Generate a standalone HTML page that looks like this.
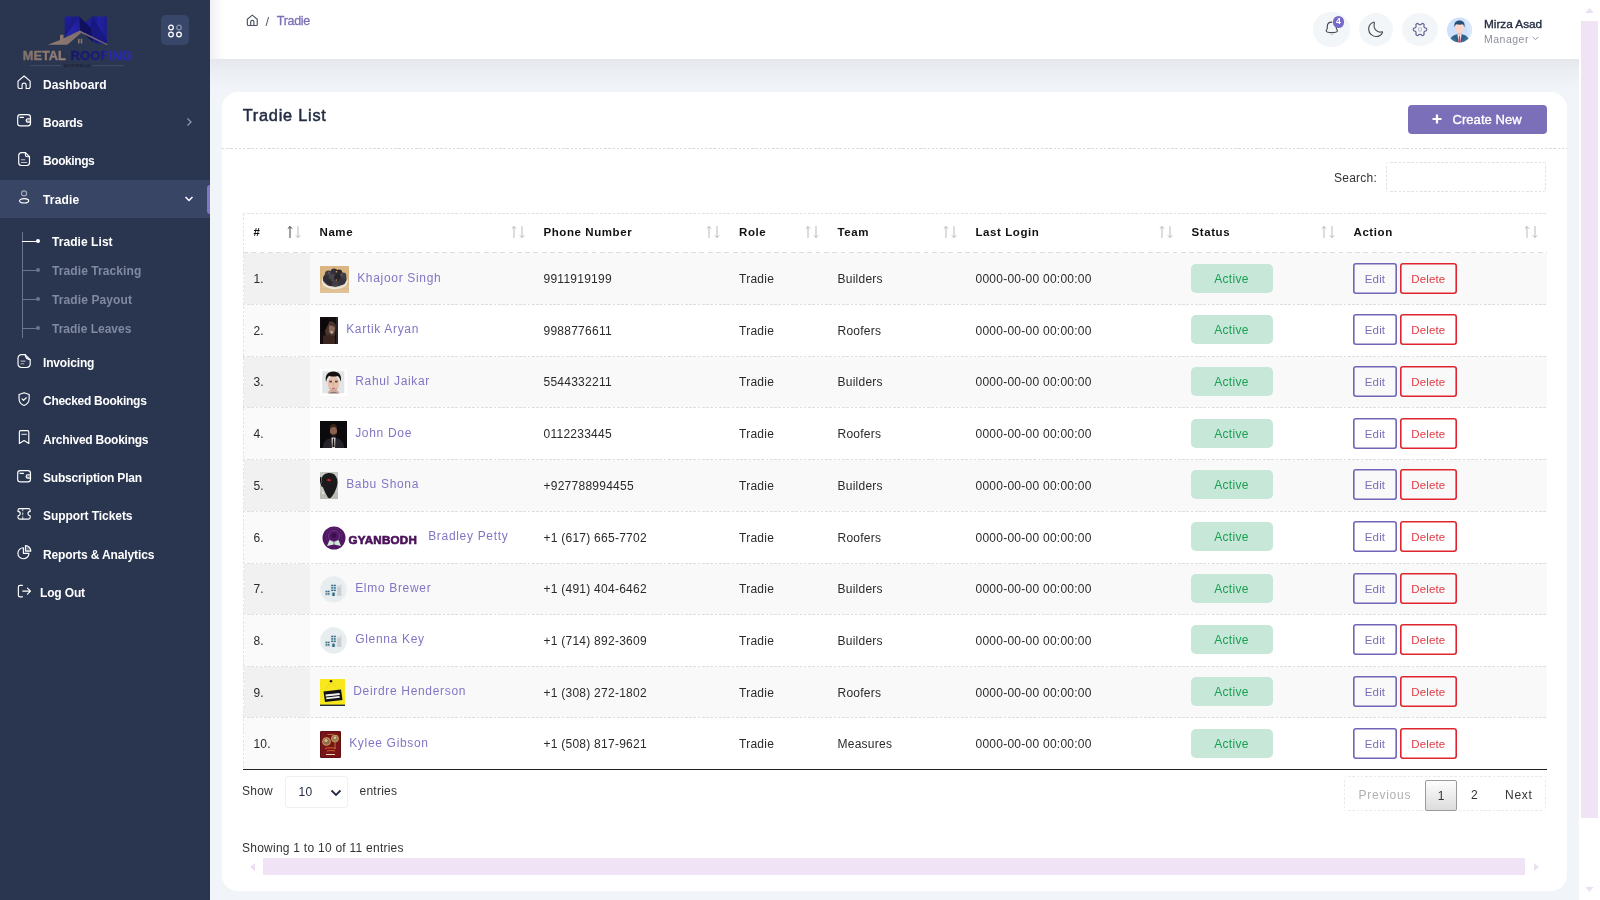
<!DOCTYPE html>
<html lang="en">
<head>
<meta charset="utf-8">
<title>Tradie List</title>
<style>
*{box-sizing:border-box;margin:0;padding:0}
html,body{width:1600px;height:900px;overflow:hidden}
#sb,#hd,#card,#vs,#band{will-change:transform}
body{font-family:"Liberation Sans",sans-serif;background:#f1f5f9;position:relative;color:#232d42}
/* ---------- sidebar ---------- */
#sb{position:absolute;left:0;top:0;width:210px;height:900px;background:#2a3650}
#tog{position:absolute;left:161px;top:15px;width:28px;height:30px;border-radius:5px;background:#38466a}
.mi{position:absolute;left:0;width:210px;height:38px;color:#fff;font-weight:700;font-size:12px}
.mi .ic{position:absolute;left:16px;top:9.200px;width:16.200px;height:16.200px}
.mi .tx{position:absolute;left:43px;top:12.700px;line-height:14px;white-space:nowrap}
.mi.act{background:#384564}
.sub{position:absolute;left:52px;color:#8189a0;font-weight:700;font-size:12px;line-height:14px;white-space:nowrap}
.sub.on{color:#fff}
/* ---------- header ---------- */
#hd{position:absolute;left:210px;top:0;width:1369px;height:59px;background:#fff}
#band{position:absolute;left:210px;top:59px;width:1369px;height:34px;background:linear-gradient(#e5e7ed,#eaedf2 35%,#f0f3f8 75%,#f1f5f9)}
.cbtn{position:absolute;border-radius:50%;background:#f3f6f9}
/* ---------- scrollbars ---------- */
#vs{position:absolute;left:1579px;top:0;width:21px;height:900px;background:#fff}
#vs .th{position:absolute;left:2px;top:21px;width:17px;height:797px;background:#efe3f5}
/* ---------- card ---------- */
#card{position:absolute;left:222px;top:92px;width:1345px;height:798.5px;background:#fff;border-radius:16px}
#ttl{position:absolute;left:20.700px;top:12.300px;font-size:16.300px;line-height:22px;color:#232d42;font-weight:400;-webkit-text-stroke:.5px #232d42;letter-spacing:.78px}
#cn{position:absolute;left:1186px;top:13px;width:139px;height:29px;border-radius:4px;background:#7b6fb9;color:#fff;font-size:13px;font-weight:400;-webkit-text-stroke:.35px #fff;line-height:29px}
#dl{position:absolute;left:0;top:55.500px;width:1345px;height:1px;background-image:repeating-linear-gradient(90deg,#d9dbe3 0 2.500px,transparent 2.500px 4.200px)}
/* ---------- table ---------- */
table{position:absolute;left:21px;top:121px;width:1303px;border-collapse:collapse;table-layout:fixed;font-size:12px;color:#2a2a2a}
th{height:39px;text-align:left;padding-left:10px;padding-bottom:1.400px;font-weight:700;color:#111;position:relative;border-top:1px solid transparent;border-bottom:1px solid transparent;letter-spacing:.58px;font-size:11.5px}
td{height:51.7px;padding-left:10px;padding-top:1.5px;border-bottom:1px solid transparent;letter-spacing:.25px;white-space:nowrap}
tr.o td{background:#f9f9f9}
tr.o td:first-child{background:#f1f1f1}
tr.e td:first-child{background:#fafafa}
td:first-child,th:first-child{border-left:1px solid transparent;padding-left:9.400px}
.nm{color:#8176c4;letter-spacing:.68px;font-size:12px}
.bd{position:relative;top:-1px;left:-1px;display:inline-block;width:82px;height:29px;line-height:31px;border-radius:5px;background:#c7e7d9;color:#1aa053;text-align:center;font-size:12px;letter-spacing:.3px}
.be,.bx{position:relative;top:-1px;left:-1px;display:inline-block;height:31px;line-height:32px;border-radius:3px;text-align:center;font-size:11.5px;letter-spacing:.15px;vertical-align:middle}
.be{width:44px;box-shadow:inset 0 0 0 1.6px #6f66b8;color:#7b6fb9;margin-right:3.5px;left:-.5px}
.bx{width:56.5px;box-shadow:inset 0 0 0 1.6px #e0242f;color:#e03a45}

.so{position:absolute;right:8px;top:11px}
th svg{position:absolute;right:8px;top:11px}
.im{display:inline-block;vertical-align:middle;margin-right:8.700px}
.nm{vertical-align:middle;position:relative;top:-1.5px}
#sr{position:absolute;left:1112px;top:79px;font-size:12px;line-height:15px;color:#333;letter-spacing:.25px}
#si{position:absolute;left:1163.500px;top:69.500px;width:160px;height:30.500px;background:repeating-linear-gradient(90deg,#e2e2e2 0 2.500px,transparent 2.500px 4.250px) top/100% 1px no-repeat,repeating-linear-gradient(90deg,#e2e2e2 0 2.500px,transparent 2.500px 4.250px) bottom/100% 1px no-repeat,repeating-linear-gradient(180deg,#e2e2e2 0 2.500px,transparent 2.500px 4.250px) left/1px 100% no-repeat,repeating-linear-gradient(180deg,#e2e2e2 0 2.500px,transparent 2.500px 4.250px) right/1px 100% no-repeat;border-radius:3px}
#bl{position:absolute;left:21px;top:677px;width:1304px;height:1px;background:#222}
#sh,#en,#info{position:absolute;font-size:12px;line-height:15px;color:#333;letter-spacing:.25px}
#sh{left:20px;top:692px}#en{left:137.5px;top:692px}#info{left:20px;top:749px}
#sel{position:absolute;left:63px;top:684px;width:63px;height:32px;border:1px solid #f0f0f0;border-radius:3px;font-size:12px;line-height:30.500px;padding-left:12.5px;color:#232d42;letter-spacing:.25px}
#sel svg{position:absolute;left:44px;top:12px}
#pg{position:absolute;left:1122px;top:684px;width:202px;height:35px;border:1px solid transparent;background-origin:border-box !important;background:repeating-linear-gradient(90deg,#ebebeb 0 2.500px,transparent 2.500px 4.250px) top/100% 1px no-repeat,repeating-linear-gradient(90deg,#ebebeb 0 2.500px,transparent 2.500px 4.250px) bottom/100% 1px no-repeat,repeating-linear-gradient(180deg,#ebebeb 0 2.500px,transparent 2.500px 4.250px) left/1px 100% no-repeat,repeating-linear-gradient(180deg,#ebebeb 0 2.500px,transparent 2.500px 4.250px) right/1px 100% no-repeat;border-radius:3px;font-size:12px;letter-spacing:.75px;color:#333}
#pg span{position:absolute;top:11px;line-height:15px}
#pg .p1{left:80px;top:3px;width:32px;height:31px;border:1px solid #9a9a9a;border-radius:2px;background:linear-gradient(#fdfdfd,#dcdcdc);text-align:center;line-height:30px;letter-spacing:0}
#hs{position:absolute;left:21px;top:766.200px;width:1304px;height:17.200px}
#hs .th{position:absolute;left:20px;top:0;width:1262px;height:17.200px;background:#efe3f5}
.hl{position:absolute;left:21px;width:1304px;height:1px;background-image:repeating-linear-gradient(90deg,#dedede 0 2.500px,#fff 2.500px 4.250px)}
</style>
</head>
<body>
<div id="sb">
  <svg style="position:absolute;left:20px;top:14px" width="116" height="56" viewBox="0 0 116 56">
<defs>
<linearGradient id="lg2" x1="0" y1="0" x2="1" y2="0"><stop offset="0" stop-color="#917c72"/><stop offset="1" stop-color="#7f6e6c"/></linearGradient>
<linearGradient id="lg3" x1="0" y1="0" x2="1" y2="0"><stop offset="0" stop-color="#82706a"/><stop offset="1" stop-color="#978277"/></linearGradient>
<linearGradient id="lg4" x1="0" y1="0" x2="1" y2="0"><stop offset="0" stop-color="#171768"/><stop offset=".53" stop-color="#1c1c80"/><stop offset=".6" stop-color="#2727a8"/><stop offset="1" stop-color="#2a2ab0"/></linearGradient>
<linearGradient id="lA" x1="0" y1="0" x2="1" y2="1"><stop offset="0" stop-color="#2020a0"/><stop offset="1" stop-color="#141466"/></linearGradient>
<linearGradient id="lB" x1="0" y1="1" x2="1" y2="0"><stop offset="0" stop-color="#2a2ab6"/><stop offset="1" stop-color="#1c1c92"/></linearGradient>
<linearGradient id="lC" x1="0" y1="0" x2="1" y2="0"><stop offset="0" stop-color="#18187c"/><stop offset=".5" stop-color="#2222a0"/><stop offset="1" stop-color="#1c1c8e"/></linearGradient>
</defs>
<path d="M44.600 2.500H59.300L54 12 44.600 23.300z" fill="url(#lA)"/>
<path d="M59.300 2.500 60.200 16.700 44.600 23.300z" fill="url(#lB)"/>
<path d="M59.300 2.500 65.700 8.800 72.200 2.500 71.500 18.500 73 28l-13-11.300z" fill="#10105e"/>
<path d="M65.700 8.800 72.200 2.500 71 14z" fill="#1f1f98"/>
<path d="M72.200 2.500H86.900V29c-4 .8-9 .6-11.500-.5-2-1-3.400-3-3.800-6z" fill="url(#lC)"/>
<path d="M72.200 2.500 86.900 26V29c-5 .8-9 .5-11.500-.5z" fill="#17177c" opacity=".75"/>
<path d="M27.900 30.700 40 26v-5.200h3.500v3.800L60 16.600l1.600 1.800L47.400 30.700z" fill="url(#lg2)"/>
<path d="M60 16.600 87.600 30.200l-.6 1L59.500 18.300z" fill="#776a76"/>
<rect x="58" y="24.900" width="1.600" height="4.600" fill="#8a7672"/><rect x="60.700" y="24.900" width="1.600" height="4.600" fill="#8a7672"/>
<text x="2.800" y="46" font-family="Liberation Sans, sans-serif" font-weight="700" font-size="12.500" fill="url(#lg3)" stroke="url(#lg3)" stroke-width=".35" textLength="43" lengthAdjust="spacingAndGlyphs">METAL</text>
<text x="50.500" y="46" font-family="Liberation Sans, sans-serif" font-weight="700" font-size="12.500" fill="url(#lg4)" stroke="url(#lg4)" stroke-width=".35" textLength="61.500" lengthAdjust="spacingAndGlyphs">ROOFING</text>
<path d="M10 51.700h31.300M72.600 51.700h31.400" stroke="#46516c" stroke-width=".8"/>
<text x="43.800" y="53.200" font-family="Liberation Sans, sans-serif" font-weight="700" font-size="3.600" fill="#1c2234" textLength="26.400" lengthAdjust="spacingAndGlyphs">AUSTRALIA</text>
</svg>
<div id="tog"><svg style="position:absolute;left:6px;top:8.800px" width="16" height="14" viewBox="0 0 16 14" fill="none" stroke="#fff" stroke-width="1.3"><circle cx="4" cy="3.500" r="2.300"/><circle cx="12" cy="3.500" r="2.300" stroke-opacity=".4"/><circle cx="4" cy="10.500" r="2.300"/><circle cx="12" cy="10.500" r="2.300"/></svg></div>
<div class="mi" style="top:65px"><svg class="ic" viewBox="0 0 24 24" fill="none" stroke="#fff" stroke-width="1.7" stroke-linecap="round" stroke-linejoin="round" ><path d="M3 10.5 12 3l9 7.5V19a2.5 2.5 0 0 1-2.500 2.500H15v-5a3 3 0 0 0-6 0v5H5.500A2.500 2.500 0 0 1 3 19z"/></svg><span class="tx" style="letter-spacing:0.11px">Dashboard</span></div>
<div class="mi" style="top:103.3px"><svg class="ic" viewBox="0 0 24 24" fill="none" stroke="#fff" stroke-width="1.7" stroke-linecap="round" stroke-linejoin="round" ><rect x="2.500" y="4" width="19" height="16.500" rx="4"/><path d="M6 8h5"/><path d="M21.500 10h-4a2.500 2.500 0 0 0 0 5h4" fill="#fff" fill-opacity=".35"/></svg><span class="tx" style="letter-spacing:-0.26px">Boards</span><svg style="position:absolute;left:185px;top:14px" width="8" height="10" viewBox="0 0 8 10" fill="none" stroke="#8d97b0" stroke-width="1.3"><path d="M2.500 1.500 6 5 2.500 8.500"/></svg></div>
<div class="mi" style="top:141.7px"><svg class="ic" viewBox="0 0 24 24" fill="none" stroke="#fff" stroke-width="1.7" stroke-linecap="round" stroke-linejoin="round" ><path d="M14 2.500H8a4 4 0 0 0-4 4v11a4 4 0 0 0 4 4h8a4 4 0 0 0 4-4V8.500z"/><path d="M14 2.500V6a2.500 2.500 0 0 0 2.500 2.500H20"/><path d="M8 13h5M8 17h8" stroke-opacity=".7"/></svg><span class="tx" style="letter-spacing:-0.41px">Bookings</span></div>
<div class="mi act" style="top:180px"><svg class="ic" viewBox="0 0 24 24" fill="none" stroke="#fff" stroke-width="1.7" stroke-linecap="round" stroke-linejoin="round" ><circle cx="12" cy="6.500" r="3.700" stroke-opacity=".55"/><ellipse cx="12" cy="17.500" rx="6.800" ry="3.300"/></svg><span class="tx" style="letter-spacing:0.18px">Tradie</span><svg style="position:absolute;left:184px;top:15px" width="10" height="8" viewBox="0 0 10 8" fill="none" stroke="#fff" stroke-width="1.5"><path d="M1.500 2 5 5.500 8.500 2"/></svg><div style="position:absolute;left:207px;top:5px;width:3px;height:28.500px;background:#8377c4;border-radius:3px 0 0 3px"></div></div>
<div class="mi" style="top:343.5px"><svg class="ic" viewBox="0 0 24 24" fill="none" stroke="#fff" stroke-width="1.7" stroke-linecap="round" stroke-linejoin="round" ><path d="M13.500 2.500H8a5 5 0 0 0-5 5v9a5 5 0 0 0 5 5h8a5 5 0 0 0 5-5v-6.500z"/><path d="M13.500 2.500c.5 4 3 7 7.500 7.500"/><path d="M7.500 12h6M7.500 16h4" stroke-opacity=".6"/></svg><span class="tx" style="letter-spacing:-0.16px">Invoicing</span></div>
<div class="mi" style="top:381.8px"><svg class="ic" viewBox="0 0 24 24" fill="none" stroke="#fff" stroke-width="1.7" stroke-linecap="round" stroke-linejoin="round" ><path d="M12 2.500 4.500 5.300V11c0 5 3.200 8.800 7.500 10.500 4.300-1.700 7.500-5.500 7.500-10.500V5.300z"/><path d="m9 11.800 2.200 2.200L15.200 10"/></svg><span class="tx" style="letter-spacing:-0.28px">Checked Bookings</span></div>
<div class="mi" style="top:420.2px"><svg class="ic" viewBox="0 0 24 24" fill="none" stroke="#fff" stroke-width="1.7" stroke-linecap="round" stroke-linejoin="round" ><path d="M5 4.500A2 2 0 0 1 7 2.500h10a2 2 0 0 1 2 2v17l-7-4.500-7 4.500z"/><path d="M8.500 8h7" stroke-opacity=".7"/></svg><span class="tx" style="letter-spacing:-0.24px">Archived Bookings</span></div>
<div class="mi" style="top:458.5px"><svg class="ic" viewBox="0 0 24 24" fill="none" stroke="#fff" stroke-width="1.7" stroke-linecap="round" stroke-linejoin="round" ><rect x="2.500" y="4" width="19" height="16.500" rx="4"/><path d="M6 8h5"/><path d="M21.500 10h-4a2.500 2.500 0 0 0 0 5h4" fill="#fff" fill-opacity=".35"/></svg><span class="tx" style="letter-spacing:-0.18px">Subscription Plan</span></div>
<div class="mi" style="top:496.8px"><svg class="ic" viewBox="0 0 24 24" fill="none" stroke="#fff" stroke-width="1.7" stroke-linecap="round" stroke-linejoin="round" ><path d="M3 8V6.500A2.500 2.500 0 0 1 5.500 4h13A2.500 2.500 0 0 1 21 6.500V8a3.200 3.200 0 0 0 0 6.500V17a2.500 2.500 0 0 1-2.500 2.500h-13A2.500 2.500 0 0 1 3 17v-2.500A3.200 3.200 0 0 0 3 8z"/><path d="M10 4v15.500" stroke-dasharray="3 3" stroke-opacity=".7"/></svg><span class="tx" style="letter-spacing:-0.07px">Support Tickets</span></div>
<div class="mi" style="top:535.2px"><svg class="ic" viewBox="0 0 24 24" fill="none" stroke="#fff" stroke-width="1.7" stroke-linecap="round" stroke-linejoin="round" ><path d="M11 5.500A8.200 8.200 0 1 0 19.200 14H11z"/><path d="M14 2.500V10.500h8A8 8 0 0 0 14 2.500z" fill="#fff" fill-opacity=".3"/></svg><span class="tx" style="letter-spacing:-0.12px">Reports &amp; Analytics</span></div>
<div class="mi" style="top:573.5px"><svg class="ic" viewBox="0 0 24 24" fill="none" stroke="#fff" stroke-width="1.7" stroke-linecap="round" stroke-linejoin="round" ><path d="M9.500 3.500H6a2.500 2.500 0 0 0-2.500 2.500v12A2.500 2.500 0 0 0 6 20.500h3.500"/><path d="M10 12h11M17 7.500l4.500 4.500-4.500 4.500"/></svg><span class="tx" style="left:40px;letter-spacing:-.15px">Log Out</span></div>
<div style="position:absolute;left:22px;top:232px;width:1px;height:106px;background:#6b7590"></div>
<div style="position:absolute;left:22px;top:240.5px;width:15px;height:1px;background:#fff"></div><div style="position:absolute;left:36px;top:239px;width:4px;height:4px;border-radius:50%;background:#fff"></div><div class="sub on" style="top:234.7px;letter-spacing:0.06px">Tradie List</div>
<div style="position:absolute;left:22px;top:269.5px;width:15px;height:1px;background:#6b7590"></div><div style="position:absolute;left:36px;top:268px;width:4px;height:4px;border-radius:50%;background:#6b7590"></div><div class="sub" style="top:263.7px;letter-spacing:0.09px">Tradie Tracking</div>
<div style="position:absolute;left:22px;top:298.5px;width:15px;height:1px;background:#6b7590"></div><div style="position:absolute;left:36px;top:297px;width:4px;height:4px;border-radius:50%;background:#6b7590"></div><div class="sub" style="top:292.7px;letter-spacing:0.1px">Tradie Payout</div>
<div style="position:absolute;left:22px;top:327.5px;width:15px;height:1px;background:#6b7590"></div><div style="position:absolute;left:36px;top:326px;width:4px;height:4px;border-radius:50%;background:#6b7590"></div><div class="sub" style="top:321.7px">Tradie Leaves</div>

</div>
<div style="position:absolute;left:210px;top:0;width:14px;height:59px;background:linear-gradient(90deg,rgba(30,40,70,.07),rgba(30,40,70,0));z-index:5;pointer-events:none"></div>
<div id="hd">
<svg style="position:absolute;left:35.700px;top:13.700px" width="12.600" height="12.600" viewBox="0 0 14 14" fill="none" stroke="#4f5663" stroke-width="1.300" stroke-linejoin="round"><path d="M1.500 5.800 7 1.300l5.500 4.500v5.700a1.500 1.500 0 0 1-1.500 1.500H3a1.500 1.500 0 0 1-1.500-1.500z"/><path d="M5.200 13V8.800a1.800 1.800 0 0 1 3.600 0V13"/></svg>
<span style="position:absolute;left:55.500px;top:14px;font-size:13px;line-height:15px;color:#555c6b">/</span>
<span style="position:absolute;left:66.800px;top:14.300px;font-size:12.500px;line-height:15px;color:#7b6fb9;-webkit-text-stroke:.3px #7b6fb9;letter-spacing:-.3px">Tradie</span>
<div class="cbtn" style="left:1103.3px;top:12.4px;width:36.7px;height:34.2px"></div>
<svg style="position:absolute;left:1114px;top:20.300px" width="16" height="15.800" viewBox="0 0 16 17" preserveAspectRatio="none" fill="none" stroke-linecap="round"><path d="M7.800 2.300c-2.700 0-4.500 2-4.500 4.600v1.600c0 .7-.2 1.200-.6 1.800-.9 1.200-.5 2.500 1 2.800 2.700.5 5.500.5 8.200 0 1.500-.3 1.900-1.600 1-2.800-.4-.6-.6-1.100-.6-1.800V6.900" stroke="#484852" stroke-width="1.150"/><path d="M6.300 14.900c.6.700 2.400.700 3 0" stroke="#a9adb8" stroke-width="1"/></svg>
<div style="position:absolute;left:1122.7px;top:16.200px;width:11.400px;height:11.400px;border-radius:50%;background:#7669c8;color:#fff;font-size:8.500px;font-weight:700;line-height:11.400px;text-align:center">4</div>
<div class="cbtn" style="left:1148.500px;top:12.700px;width:34.400px;height:33.600px"></div>
<svg style="position:absolute;left:1157px;top:21px" width="17" height="17" viewBox="0 0 17 17" fill="none" stroke="#4c4c55" stroke-width="1.150" stroke-linejoin="round"><path d="M6.600 1.200C3.300 2.300 1.500 5.400 1.700 8.600c.3 3.800 3.400 6.700 7 6.900 3 .1 5.600-1.500 6.800-4.100.2-.5-.2-.9-.7-.7-4.300 1.600-9-2.700-7.400-8.600.1-.6-.3-1.100-.8-.9z"/></svg>
<div class="cbtn" style="left:1192px;top:12.700px;width:36px;height:33.600px"></div>
<svg style="position:absolute;left:1202px;top:21.500px" width="16" height="15" viewBox="0 0 16 15" fill="none" stroke-linejoin="round"><path d="M14.70 7.50 L14.63 7.96 L14.43 8.40 L14.08 8.79 L13.29 9.02 L12.81 9.25 L12.49 9.50 L12.25 9.76 L12.08 10.05 L11.98 10.39 L11.92 10.79 L11.96 11.32 L12.16 12.12 L12.00 12.62 L11.72 13.01 L11.35 13.30 L10.92 13.48 L10.43 13.52 L9.92 13.42 L9.33 12.84 L8.89 12.55 L8.51 12.39 L8.17 12.31 L7.83 12.31 L7.49 12.39 L7.11 12.55 L6.67 12.84 L6.08 13.42 L5.57 13.52 L5.08 13.48 L4.65 13.30 L4.28 13.01 L4.00 12.62 L3.84 12.12 L4.04 11.32 L4.08 10.79 L4.02 10.39 L3.92 10.05 L3.75 9.76 L3.51 9.50 L3.19 9.25 L2.71 9.02 L1.92 8.79 L1.57 8.40 L1.37 7.96 L1.30 7.50 L1.37 7.04 L1.57 6.60 L1.92 6.21 L2.71 5.98 L3.19 5.75 L3.51 5.50 L3.75 5.24 L3.92 4.95 L4.02 4.61 L4.08 4.21 L4.04 3.68 L3.84 2.88 L4.00 2.38 L4.28 1.99 L4.65 1.70 L5.08 1.52 L5.57 1.48 L6.08 1.58 L6.67 2.16 L7.11 2.45 L7.49 2.61 L7.83 2.69 L8.17 2.69 L8.51 2.61 L8.89 2.45 L9.33 2.16 L9.92 1.58 L10.43 1.48 L10.92 1.52 L11.35 1.70 L11.72 1.99 L12.00 2.38 L12.16 2.88 L11.96 3.68 L11.92 4.21 L11.98 4.61 L12.08 4.95 L12.25 5.24 L12.49 5.50 L12.81 5.75 L13.29 5.98 L14.08 6.21 L14.43 6.60 L14.63 7.04Z" stroke="#6a6592" stroke-width="1.250"/><circle cx="8" cy="7.500" r="1.700" stroke="#c0c0da" stroke-width="1.100"/></svg>
<svg style="position:absolute;left:1237px;top:17px" width="25" height="26" viewBox="0 0 25 26"><defs><clipPath id="av"><circle cx="12.500" cy="13" r="12.500"/></clipPath></defs><circle cx="12.500" cy="13" r="12.500" fill="#cde1fc"/><g clip-path="url(#av)"><path d="M16 0h9v26h-7c4-7 3-19-2-26z" fill="#d9e8fd"/><path d="M2.500 26c0-5.500 3.500-8.800 10-8.800s10 3.300 10 8.800z" fill="#3a6c98"/><path d="M12.500 26 6 19.500c1.500-1.200 3.500-2 6.500-2.200zM12.500 26 19 19.500c-1.500-1.200-3.500-2-6.500-2.200z" fill="#2f5f8b"/><path d="M10.500 17.300h4l-1 8.700h-2z" fill="#f7f7f9"/><path d="M12 18.700h1l.7 5.500-1.200 1.800-1.200-1.800z" fill="#d2414f"/><rect x="10.900" y="14" width="3.200" height="4.200" fill="#f5c4b4"/><ellipse cx="12.500" cy="10.800" rx="4.100" ry="5.200" fill="#fcd6cc"/><path d="M7.600 10.500c-1-4.500 1.200-7 4.900-7s5.900 2.500 4.900 7c-.4-1.800-1-2.700-1.700-3.200-1.800.6-4.600.6-6.400 0-.7.500-1.300 1.400-1.700 3.200z" fill="#2a4f74"/></g></svg>
<span style="position:absolute;left:1274px;top:16.900px;font-size:11.800px;line-height:15px;color:#232d42;-webkit-text-stroke:.35px #232d42;letter-spacing:-.02px">Mirza Asad</span>
<span style="position:absolute;left:1274px;top:32.500px;font-size:10.500px;line-height:13px;color:#8b909c;letter-spacing:.5px">Manager</span>
<svg style="position:absolute;left:1322px;top:36px" width="7" height="5" viewBox="0 0 7 5" fill="none" stroke="#8a92a6" stroke-width="1"><path d="M.8 1 3.500 3.700 6.200 1"/></svg>
</div>
<div id="band"></div>
<div id="vs"><div class="th"></div>
<svg style="position:absolute;left:5.500px;top:8px" width="9" height="5" viewBox="0 0 10 6"><path d="M0 6 5 0l5 6z" fill="#ecdff3"/></svg>
<svg style="position:absolute;left:5.500px;top:887px" width="9" height="5" viewBox="0 0 10 6"><path d="M0 0h10L5 6z" fill="#ecdff3"/></svg>
</div>
<div id="card">
  <div id="ttl">Tradie List</div>
  <div id="cn"><svg style="position:absolute;left:24px;top:9px" width="10" height="10" viewBox="0 0 10 10"><path d="M5 .5v9M.5 5h9" stroke="#fff" stroke-width="2.200"/></svg><span style="position:absolute;left:44.500px;top:0;letter-spacing:.05px">Create New</span></div>
  <div id="dl"></div>
  <table><colgroup><col style="width:66px"><col style="width:224px"><col style="width:195.5px"><col style="width:98.5px"><col style="width:138px"><col style="width:216px"><col style="width:162px"><col style="width:203px"></colgroup>
<tr><th>#<svg class="so" width="16" height="14" viewBox="0 0 16 14" fill="none" stroke-width=".85"><path d="M4 13V1.500M1.800 3.700 4 1.500 6.200 3.700" stroke="#222"/><path d="M12 1v11.500M9.800 10.300l2.200 2.200 2.200-2.200" stroke="#adadad"/></svg></th><th>Name<svg class="so" width="16" height="14" viewBox="0 0 16 14" fill="none" stroke-width=".85"><path d="M4 13V1.500M1.800 3.700 4 1.500 6.200 3.700" stroke="#adadad"/><path d="M12 1v11.500M9.800 10.300l2.200 2.200 2.200-2.200" stroke="#adadad"/></svg></th><th>Phone Number<svg class="so" width="16" height="14" viewBox="0 0 16 14" fill="none" stroke-width=".85"><path d="M4 13V1.500M1.800 3.700 4 1.500 6.200 3.700" stroke="#adadad"/><path d="M12 1v11.500M9.800 10.300l2.200 2.200 2.200-2.200" stroke="#adadad"/></svg></th><th>Role<svg class="so" width="16" height="14" viewBox="0 0 16 14" fill="none" stroke-width=".85"><path d="M4 13V1.500M1.800 3.700 4 1.500 6.200 3.700" stroke="#adadad"/><path d="M12 1v11.500M9.800 10.300l2.200 2.200 2.200-2.200" stroke="#adadad"/></svg></th><th>Team<svg class="so" width="16" height="14" viewBox="0 0 16 14" fill="none" stroke-width=".85"><path d="M4 13V1.500M1.800 3.700 4 1.500 6.200 3.700" stroke="#adadad"/><path d="M12 1v11.500M9.800 10.300l2.200 2.200 2.200-2.200" stroke="#adadad"/></svg></th><th>Last Login<svg class="so" width="16" height="14" viewBox="0 0 16 14" fill="none" stroke-width=".85"><path d="M4 13V1.500M1.800 3.700 4 1.500 6.200 3.700" stroke="#adadad"/><path d="M12 1v11.500M9.800 10.300l2.200 2.200 2.200-2.200" stroke="#adadad"/></svg></th><th>Status<svg class="so" width="16" height="14" viewBox="0 0 16 14" fill="none" stroke-width=".85"><path d="M4 13V1.500M1.800 3.700 4 1.500 6.200 3.700" stroke="#adadad"/><path d="M12 1v11.500M9.800 10.300l2.200 2.200 2.200-2.200" stroke="#adadad"/></svg></th><th>Action<svg class="so" width="16" height="14" viewBox="0 0 16 14" fill="none" stroke-width=".85"><path d="M4 13V1.500M1.800 3.700 4 1.500 6.200 3.700" stroke="#adadad"/><path d="M12 1v11.500M9.800 10.300l2.200 2.200 2.200-2.200" stroke="#adadad"/></svg></th></tr>
<tr class="o"><td>1.</td><td><svg class="im" width="29" height="27" viewBox="0 0 29 27"><rect width="29" height="27" fill="#dbb683"/><rect y="19" width="29" height="8" fill="#e0c296"/><path d="M0 4h29M0 9h29M0 23h29" stroke="#d2ab78" stroke-width=".6" opacity=".6"/><ellipse cx="14.800" cy="15" rx="13" ry="8.300" fill="#efe9df"/><ellipse cx="14.800" cy="13.800" rx="12.200" ry="7.600" fill="#cfc6ba"/><ellipse cx="14.800" cy="12.800" rx="11.800" ry="7.800" fill="#39353a"/><circle cx="8.500" cy="8" r="3.600" fill="#3f3b42"/><circle cx="14" cy="5.800" r="3.300" fill="#34303a"/><circle cx="19" cy="6.800" r="3.200" fill="#2b272d"/><circle cx="23" cy="10" r="3.400" fill="#423e46"/><circle cx="6.500" cy="13" r="3.400" fill="#322e35"/><circle cx="12" cy="11" r="3.300" fill="#4a464e"/><circle cx="17.500" cy="12" r="3.500" fill="#27232a"/><circle cx="22" cy="15.500" r="3.200" fill="#38343b"/><circle cx="10" cy="16.500" r="3.300" fill="#2d2930"/><circle cx="15.500" cy="17.500" r="3.200" fill="#413d45"/><circle cx="9" cy="7" r="1.200" fill="#5a565e"/><circle cx="21.500" cy="9" r="1.100" fill="#5c5860"/><circle cx="12.500" cy="14.500" r="1" fill="#55515a"/><circle cx="16.500" cy="5.800" r=".8" fill="#d8a548"/><circle cx="16.300" cy="14" r=".7" fill="#c9963e"/></svg><span class="nm">Khajoor Singh</span></td><td>9911919199</td><td>Tradie</td><td>Builders</td><td>0000-00-00 00:00:00</td><td><span class="bd">Active</span></td><td><span class="be">Edit</span><span class="bx">Delete</span></td></tr>
<tr class="e"><td>2.</td><td><svg class="im" width="18" height="27" viewBox="0 0 18 27"><rect width="18" height="27" fill="#120d0f"/><path d="M6 6c3-3 9-2 10 3l-1 9c-2 4-6 5-8 2-2-3-3-9-1-14z" fill="#4a342c"/><path d="M9 9c2-1 5 0 6 2l-1 5c-2 1-4 1-5-1z" fill="#8a6a58"/><path d="M3 19c3-2 8-1 12 1v7H3z" fill="#3a261f"/><path d="M10 14l3 .500-1 3z" fill="#c9b5a8"/><path d="M1 3c3-2 7-2 9 0L6 12 2 16z" fill="#0c0809"/><rect x="16" width="2" height="27" fill="#2a2224"/></svg><span class="nm">Kartik Aryan</span></td><td>9988776611</td><td>Tradie</td><td>Roofers</td><td>0000-00-00 00:00:00</td><td><span class="bd">Active</span></td><td><span class="be">Edit</span><span class="bx">Delete</span></td></tr>
<tr class="o"><td>3.</td><td><svg class="im" width="27" height="27" viewBox="0 0 27 27"><rect width="27" height="27" fill="#fff"/><rect x="2.300" y="2.300" width="22" height="22" fill="#e2e4e6"/><path d="M7.500 24.300c.5-2.500 2.500-3.500 6-3.500s5.500 1 6 3.500z" fill="#d3b09c"/><path d="M8 24.300c2-1 9-1 11 0z" fill="#3a3f48"/><ellipse cx="13.400" cy="14.500" rx="5.600" ry="7.600" fill="#e6c0aa"/><path d="M6.200 13c-1.800-6.500 1.800-10.500 7.200-10.500S22.400 6.500 20.600 13c-.3-3.200-1.500-5.300-3-6-2 .8-6 .8-8.400 0-1.500.9-2.700 2.800-3 6z" fill="#17110f"/><path d="M9.300 12.200h2.700M15 12.200h2.700" stroke="#2c201e" stroke-width="1.100"/><path d="M9.800 13.300h2M15.300 13.300h2" stroke="#5a4640" stroke-width=".7"/><path d="M13.400 13v3.500" stroke="#cfa590" stroke-width=".8"/><path d="M12 19.400h3" stroke="#c2727a" stroke-width="1.300"/><path d="M8.300 17c.8 3.800 3 5.800 5.100 5.800s4.300-2 5.100-5.800c-1 2.300-3 3.400-5.100 3.400s-4.100-1.100-5.100-3.400z" fill="#b89886" opacity=".55"/></svg><span class="nm">Rahul Jaikar</span></td><td>5544332211</td><td>Tradie</td><td>Builders</td><td>0000-00-00 00:00:00</td><td><span class="bd">Active</span></td><td><span class="be">Edit</span><span class="bx">Delete</span></td></tr>
<tr class="e"><td>4.</td><td><svg class="im" width="27" height="27" viewBox="0 0 27 27"><rect width="27" height="27" fill="#0b0a0c"/><path d="M3 27c0-7 4-10 10.500-10S24 20 24 27z" fill="#26242a"/><path d="M11.500 16.500h4l-.5 10.500h-3z" fill="#d8d4d0"/><path d="M13 17.500h1l.6 8.500h-2.200z" fill="#141216"/><ellipse cx="13.500" cy="10" rx="3.600" ry="5" fill="#8a6250"/><path d="M9.800 9c-.5-4 1.500-6 3.700-6s4.200 2 3.700 6c-.5-2-1.500-3-3.700-3s-3.200 1-3.700 3z" fill="#3a241c"/><path d="M10.200 11.500c.5 3 1.800 4.500 3.300 4.500s2.800-1.500 3.300-4.500c-1 1.500-2 2-3.300 2s-2.300-.5-3.300-2z" fill="#2a1a16"/></svg><span class="nm">John Doe</span></td><td>0112233445</td><td>Tradie</td><td>Roofers</td><td>0000-00-00 00:00:00</td><td><span class="bd">Active</span></td><td><span class="be">Edit</span><span class="bx">Delete</span></td></tr>
<tr class="o"><td>5.</td><td><svg class="im" width="18" height="27" viewBox="0 0 18 27"><rect width="18" height="27" fill="#c6c9c3"/><rect y="20" width="18" height="7" fill="#b9bdb4"/><path d="M9.500 1C15 1 18 6 17.500 11c-.6 6-4 12-6.500 14.500-1 1-2.500 1-3.200-.3C5.500 21 1 13 1.500 7.500 2 3 5.500 1 9.500 1z" fill="#1a1a1c"/><path d="M1 5c-1 3 0 7 1.500 10" stroke="#0c0c0e" stroke-width="1.200" fill="none"/><path d="M6.500 8l2.500-1.500L11.500 8.500 9 9.500z" fill="#c3202c"/><circle cx="3" cy="21" r="1" fill="#f4f6e8"/></svg><span class="nm">Babu Shona</span></td><td>+927788994455</td><td>Tradie</td><td>Builders</td><td>0000-00-00 00:00:00</td><td><span class="bd">Active</span></td><td><span class="be">Edit</span><span class="bx">Delete</span></td></tr>
<tr class="e"><td>6.</td><td><svg class="im" width="100" height="26" viewBox="0 0 100 26"><circle cx="14" cy="13" r="11.500" fill="#4f1763"/><circle cx="14" cy="11" r="5.500" fill="none" stroke="#6d3a80" stroke-width="1"/><circle cx="14" cy="11" r="8" fill="none" stroke="#5e2772" stroke-width=".8"/><circle cx="14" cy="10.500" r="2.300" fill="#3a0d4a"/><path d="M7 21l2.500-6L14 17l4.500-2L21 21l-7-1.500z" fill="#cfe8d6"/><path d="M14 17v3" stroke="#4f1763" stroke-width=".6"/><text x="28.500" y="18.900" font-family="Liberation Sans, sans-serif" font-weight="700" font-size="11.800" fill="#4a1259" stroke="#4a1259" stroke-width=".7" textLength="68.500" lengthAdjust="spacingAndGlyphs">GYANBODH</text></svg><span class="nm">Bradley Petty</span></td><td>+1 (617) 665-7702</td><td>Tradie</td><td>Roofers</td><td>0000-00-00 00:00:00</td><td><span class="bd">Active</span></td><td><span class="be">Edit</span><span class="bx">Delete</span></td></tr>
<tr class="o"><td>7.</td><td><svg class="im" width="27" height="27" viewBox="0 0 27 27"><circle cx="13.500" cy="13.500" r="13.200" fill="#e8edef"/><rect x="5" y="14" width="5" height="6" fill="#d7dde0"/><rect x="10.500" y="8" width="6" height="12" fill="#dfe5e8"/><rect x="17" y="10.500" width="4.500" height="9.500" fill="#cfd6da"/><path d="M17 10.500l4.500-2v2z" fill="#cfd6da"/><g fill="#2f6a86"><rect x="5.600" y="14.800" width="1.700" height="1.400"/><rect x="7.800" y="14.800" width="1.700" height="1.400"/><rect x="5.600" y="17.200" width="1.700" height="1.400"/><rect x="7.800" y="17.200" width="1.700" height="1.400"/><rect x="11.200" y="8.800" width="2" height="1.400"/><rect x="13.800" y="8.800" width="2" height="1.400"/><rect x="11.200" y="11.200" width="2" height="1.400"/><rect x="13.800" y="11.200" width="2" height="1.400"/><rect x="11.200" y="13.600" width="2" height="1.400"/><rect x="13.800" y="13.600" width="2" height="1.400"/><rect x="12.300" y="16.500" width="2.400" height="3.500" rx=".5"/></g><g stroke="#bcc5ca" stroke-width=".5"><path d="M17.600 12.500h3.400M17.600 14h3.400M17.600 15.500h3.400M17.600 17h3.400M17.600 18.500h3.400"/></g></svg><span class="nm">Elmo Brewer</span></td><td>+1 (491) 404-6462</td><td>Tradie</td><td>Builders</td><td>0000-00-00 00:00:00</td><td><span class="bd">Active</span></td><td><span class="be">Edit</span><span class="bx">Delete</span></td></tr>
<tr class="e"><td>8.</td><td><svg class="im" width="27" height="27" viewBox="0 0 27 27"><circle cx="13.500" cy="13.500" r="13.200" fill="#e8edef"/><rect x="5" y="14" width="5" height="6" fill="#d7dde0"/><rect x="10.500" y="8" width="6" height="12" fill="#dfe5e8"/><rect x="17" y="10.500" width="4.500" height="9.500" fill="#cfd6da"/><path d="M17 10.500l4.500-2v2z" fill="#cfd6da"/><g fill="#2f6a86"><rect x="5.600" y="14.800" width="1.700" height="1.400"/><rect x="7.800" y="14.800" width="1.700" height="1.400"/><rect x="5.600" y="17.200" width="1.700" height="1.400"/><rect x="7.800" y="17.200" width="1.700" height="1.400"/><rect x="11.200" y="8.800" width="2" height="1.400"/><rect x="13.800" y="8.800" width="2" height="1.400"/><rect x="11.200" y="11.200" width="2" height="1.400"/><rect x="13.800" y="11.200" width="2" height="1.400"/><rect x="11.200" y="13.600" width="2" height="1.400"/><rect x="13.800" y="13.600" width="2" height="1.400"/><rect x="12.300" y="16.500" width="2.400" height="3.500" rx=".5"/></g><g stroke="#bcc5ca" stroke-width=".5"><path d="M17.600 12.500h3.400M17.600 14h3.400M17.600 15.500h3.400M17.600 17h3.400M17.600 18.500h3.400"/></g></svg><span class="nm">Glenna Key</span></td><td>+1 (714) 892-3609</td><td>Tradie</td><td>Builders</td><td>0000-00-00 00:00:00</td><td><span class="bd">Active</span></td><td><span class="be">Edit</span><span class="bx">Delete</span></td></tr>
<tr class="o"><td>9.</td><td><svg class="im" width="25" height="27" viewBox="0 0 25 27"><rect width="25" height="27" fill="#f8e71d"/><rect y="25.600" width="25" height="1.400" fill="#1e2a3a"/><circle cx="11" cy="2.300" r="1.300" fill="#1a1a22"/><path d="M11 3 5 12M11 3l8 8" stroke="#d9cb3a" stroke-width=".5"/><path d="M3.500 12.500 21 10.500l1.500 10.500L5 23z" fill="#111116"/><path d="M5.500 15.500 19.500 14l.3 2L5.800 17.500zM6 18.500l13.500-1.500.3 1.800L6.300 20.300z" fill="#f2f2f2"/></svg><span class="nm">Deirdre Henderson</span></td><td>+1 (308) 272-1802</td><td>Tradie</td><td>Roofers</td><td>0000-00-00 00:00:00</td><td><span class="bd">Active</span></td><td><span class="be">Edit</span><span class="bx">Delete</span></td></tr>
<tr class="e"><td>10.</td><td><svg class="im" width="21" height="27" viewBox="0 0 21 27"><rect width="21" height="27" rx="1.200" fill="#5e0f12"/><rect x="1" y="1" width="19" height="25" rx="1" fill="#7a1418"/><circle cx="6.500" cy="10.500" r="4.300" fill="#c9a45a"/><circle cx="6.500" cy="10.500" r="3.300" fill="#8f6a4a"/><circle cx="6" cy="9.500" r="1.500" fill="#d9b9a0"/><circle cx="15" cy="7.500" r="3.800" fill="#c9a45a"/><circle cx="15" cy="7.500" r="2.900" fill="#9a7a52"/><circle cx="15" cy="6.800" r="1.300" fill="#dcc0a6"/><path d="M15 11v6" stroke="#c9a45a" stroke-width=".7"/><path d="M5 17.500c3-1 7-1 11 0M7 20c2-.6 5-.6 8 0" stroke="#d0662a" stroke-width="1" fill="none"/><path d="M6 23.500h9" stroke="#e8d8b0" stroke-width="1"/><path d="M7.500 3.500h6" stroke="#c9a45a" stroke-width=".6"/></svg><span class="nm">Kylee Gibson</span></td><td>+1 (508) 817-9621</td><td>Tradie</td><td>Measures</td><td>0000-00-00 00:00:00</td><td><span class="bd">Active</span></td><td><span class="be">Edit</span><span class="bx">Delete</span></td></tr>
</table>
<div class="hl" style="top:121px;background-image:repeating-linear-gradient(90deg,#e2e2e2 0 2.500px,transparent 2.500px 4.250px)"></div>
<div class="hl" style="top:160px;background-image:repeating-linear-gradient(90deg,#dcdcdc 0 4.800px,transparent 4.800px 8.300px)"></div>
<div class="hl" style="top:212px"></div>
<div class="hl" style="top:264px"></div>
<div class="hl" style="top:315px"></div>
<div class="hl" style="top:367px"></div>
<div class="hl" style="top:419px"></div>
<div class="hl" style="top:471px"></div>
<div class="hl" style="top:522px"></div>
<div class="hl" style="top:574px"></div>
<div class="hl" style="top:625px"></div>
<div style="position:absolute;left:21px;top:121px;width:1px;height:556px;background-image:repeating-linear-gradient(180deg,#e4e4e4 0 2.500px,transparent 2.500px 4.250px)"></div>
<div id="sr">Search:</div><div id="si"></div>
<div id="bl"></div>
<div id="sh">Show</div><div id="sel">10<svg width="12" height="8" viewBox="0 0 12 8" fill="none" stroke="#232d42" stroke-width="1.800"><path d="M1.500 1.500 6 6l4.500-4.500"/></svg></div><div id="en">entries</div>
<div id="pg"><span style="left:13.5px;color:#b0b0b0">Previous</span><span class="p1">1</span><span style="left:126px">2</span><span style="left:160px">Next</span></div>
<div id="info">Showing 1 to 10 of 11 entries</div>
<div id="hs"><div class="th"></div><svg style="position:absolute;left:7px;top:4.500px" width="5" height="8" viewBox="0 0 5 8"><path d="M5 0v8L0 4z" fill="#ecdff3"/></svg><svg style="position:absolute;left:1291px;top:5px" width="5" height="8" viewBox="0 0 5 8"><path d="M0 0v8l5-4z" fill="#ecdff3"/></svg></div>

</div>
</body>
</html>
